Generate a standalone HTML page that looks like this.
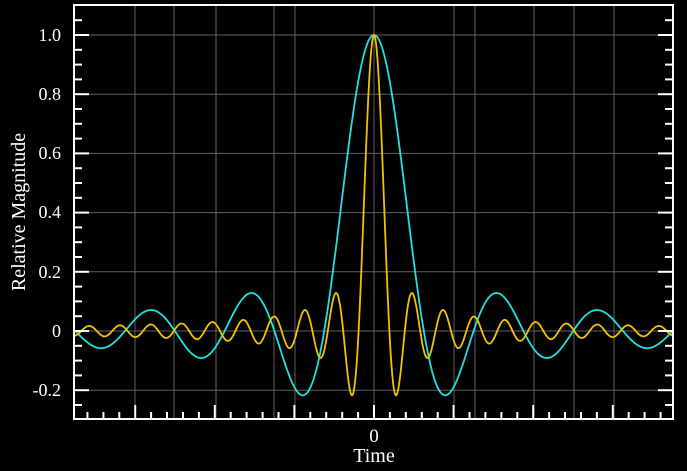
<!DOCTYPE html>
<html><head><meta charset="utf-8"><style>
html,body{margin:0;padding:0;background:#000;width:687px;height:471px;overflow:hidden}
svg{display:block}
text{font-family:"Liberation Serif",serif;fill:#fff}
</style></head><body>
<svg id="s" width="687" height="471" viewBox="0 0 687 471">
<g id="grid" stroke="#606060" stroke-width="1"></g>
<path id="cy" fill="none" stroke="#22e0e0" stroke-width="1.8"/>
<path id="ye" fill="none" stroke="#f2c200" stroke-width="1.8"/>
<g id="ax" stroke="#fff" stroke-width="2" fill="none"></g>
<g font-size="18" text-anchor="end">
<text x="61" y="41">1.0</text>
<text x="61" y="100">0.8</text>
<text x="61" y="159">0.6</text>
<text x="61" y="218">0.4</text>
<text x="61" y="278">0.2</text>
<text x="61" y="337">0</text>
<text x="61" y="396">-0.2</text>
</g>
<text x="374" y="442" font-size="19" text-anchor="middle">0</text>
<text x="374" y="462" font-size="20" text-anchor="middle">Time</text>
<text transform="translate(25,212) rotate(-90)" font-size="20" text-anchor="middle">Relative Magnitude</text>
</svg>
<script>
var L=74,R=673,T=5,B=419,C=374;
function Y(v){return 331-v*296;}
var g='';
[135,174,216,274,295,374,454,475,534,574,614].forEach(function(x){g+='<line x1="'+x+'" y1="'+T+'" x2="'+x+'" y2="'+B+'"/>';});
for(var v=-0.2;v<=1.01;v+=0.2){var y=Y(v);g+='<line x1="'+L+'" y1="'+y+'" x2="'+R+'" y2="'+y+'"/>';}
document.getElementById('grid').innerHTML=g;
function sinc(u){if(Math.abs(u)<1e-6)return 1;return Math.sin(Math.PI*u)/(Math.PI*u);}
function path(unit){var d='';for(var x=L;x<=R;x+=0.5){var y=Y(sinc((x-C)/unit));d+=(x==L?'M':'L')+x.toFixed(1)+' '+y.toFixed(1);}return d;}
document.getElementById('cy').setAttribute('d',path(49.8));
document.getElementById('ye').setAttribute('d',path(15.4));
var a='<path d="M'+L+' '+B+'V'+T+'H'+R+'V'+B+'Z"/>';
for(var i=-1;i<=26;i++){var v=-0.25+i*0.05;var y=Y(v);if(y<T+3||y>B-3)continue;var maj=Math.abs(Math.round(v/0.2)*0.2-v)<0.001;var l=maj?15:8;a+='<line x1="'+L+'" y1="'+y+'" x2="'+(L+l)+'" y2="'+y+'"/><line x1="'+R+'" y1="'+y+'" x2="'+(R-l)+'" y2="'+y+'"/>';}
for(var k=-20;k<=20;k++){var x=C+k*15.92;if(x<L+3||x>R-3)continue;var l=(k%5==0)?14:7;a+='<line x1="'+x.toFixed(1)+'" y1="'+B+'" x2="'+x.toFixed(1)+'" y2="'+(B-l)+'"/>';}
document.getElementById('ax').innerHTML=a;
</script>
</body></html>
